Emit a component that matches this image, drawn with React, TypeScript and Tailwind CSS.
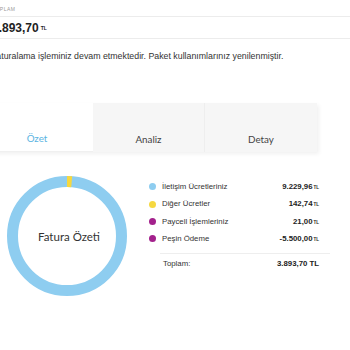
import React from "react";

const items = [
  { label: "İletişim Ücretleriniz", value: "9.229,96", color: "bg-[#8ecdf0]" },
  { label: "Diğer Ücretler", value: "142,74", color: "bg-[#f6d840]" },
  { label: "Paycell İşlemleriniz", value: "21,00", color: "bg-[#a3218c]" },
  { label: "Peşin Ödeme", value: "-5.500,00", color: "bg-[#a3218c]" },
];

const Donut = () => {
  const r = 54.5;
  const c = 2 * Math.PI * r;
  const yellow = c * 0.014;
  return (
    <div className="relative w-[122px] h-[122px]">
      <svg width="122" height="122" viewBox="0 0 122 122">
        <circle cx="61" cy="61" r={r} fill="none" stroke="#8ecdf0" strokeWidth="11" />
        <circle
          cx="61"
          cy="61"
          r={r}
          fill="none"
          stroke="#f6d840"
          strokeWidth="11"
          strokeDasharray={`${yellow} ${c}`}
          transform="rotate(-90 61 61)"
        />
      </svg>
      <div className="absolute inset-0 flex items-center justify-center pl-[4px]">
        <span className="text-[11.5px] text-[#333] font-['Lato',sans-serif]">
          Fatura Özeti
        </span>
      </div>
    </div>
  );
};

export default function App() {
  return (
    <div className="w-[350px] h-[350px] overflow-hidden bg-white font-['Liberation_Sans',Arial,sans-serif] text-[#333]">
      <div className="ml-[-8px]">
        <div className="h-[17px] pt-[6px] text-[5px] tracking-[0.5px] text-[#999] border-b border-[#ececec]">
          TOPLAM
        </div>
        <div className="h-[22px] flex items-center border-b border-[#ececec]">
          <span className="text-[12px] font-bold text-[#222]">3.893,70</span>
          <span className="text-[5px] font-bold ml-[2px] mt-[3px] text-[#222]">TL</span>
        </div>
        <p className="mt-[11px] ml-[-1px] text-[8.8px] text-[#333] whitespace-nowrap">
          Faturalama işleminiz devam etmektedir. Paket kullanımlarınız yenilenmiştir.
        </p>
      </div>

      <div className="ml-[-19px] mt-[40px] w-[336px] grid grid-cols-3 h-[49px] font-['Lato',sans-serif] text-[9.8px] shadow-[2px_2px_4px_rgba(0,0,0,0.06)]">
        <div className="bg-white flex items-end justify-center pb-[6px] text-[#5ab4e2] border-b border-[#f0f0f0]">
          Özet
        </div>
        <div className="bg-[#f6f6f6] flex items-end justify-center pb-[6px] text-[#444] border-r border-[#eeeeee]">
          Analiz
        </div>
        <div className="bg-[#f6f6f6] flex items-end justify-center pb-[6px] text-[#444]">
          Detay
        </div>
      </div>

      <div className="flex mt-[22px]">
        <div className="ml-[6px] mt-[1px]">
          <Donut />
        </div>
        <div className="ml-[18px] w-[187px] mt-[4px]">
          {items.map((it) => (
            <div key={it.label} className="h-[17.3px] flex items-center pl-[3px] pr-[14px] text-[7.8px]">
              <span className={`w-[7px] h-[7px] rounded-full ${it.color}`} />
              <span className="ml-[6px] text-[#333]">{it.label}</span>
              <span className="ml-auto font-bold text-[#222]">
                {it.value}
                <span className="text-[4.5px] ml-[1px]">TL</span>
              </span>
            </div>
          ))}
          <div className="mt-[6px] ml-[14px] mr-[3px] border-t border-[#eeeeee] h-[20px] flex items-center pr-[11px] text-[7.8px]">
            <span className="text-[#333] ml-[3px]">Toplam:</span>
            <span className="ml-auto font-bold text-[#222]">3.893,70 TL</span>
          </div>
        </div>
      </div>
    </div>
  );
}
